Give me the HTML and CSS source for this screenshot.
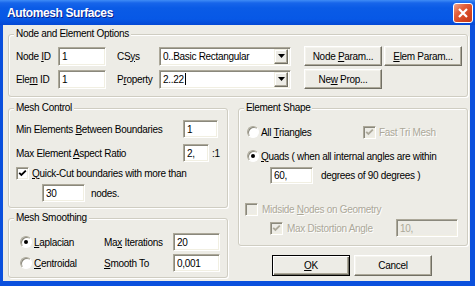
FILE: index.html
```html
<!DOCTYPE html>
<html lang="en">
<head>
  <meta charset="UTF-8">
  <title>Automesh Surfaces</title>
  <link rel="stylesheet" href="styles.css">
</head>
<body>
  <div class="window">
    <div class="titlebar">
      <span class="title">Automesh Surfaces</span>
      <span class="close">
        <svg width="10" height="10" viewBox="0 0 10 10"><path d="M1 1L9 9M9 1L1 9" stroke="#fff" stroke-width="2.2"/></svg>
      </span>
    </div>

    <div class="client">
      <fieldset class="group top-group">
        <legend>Node and Element Options</legend>
        <div class="opts">
          <label>Node <u>I</u>D</label>
          <input class="field node-id" type="text" value="1">
          <label>CS<u>y</u>s</label>
          <div class="combo">
            <span>0..Basic Rectangular</span>
            <span class="combo-btn"><svg width="7" height="4" viewBox="0 0 7 4"><path d="M0 0H7L3.5 4Z"/></svg></span>
          </div>
          <button class="btn">Node <u>P</u>aram...</button>
          <button class="btn"><u>E</u>lem Param...</button>

          <label>Ele<u>m</u> ID</label>
          <input class="field node-id" type="text" value="1">
          <label>P<u>r</u>operty</label>
          <div class="combo">
            <span>2..22<span class="caret"></span></span>
            <span class="combo-btn"><svg width="7" height="4" viewBox="0 0 7 4"><path d="M0 0H7L3.5 4Z"/></svg></span>
          </div>
          <button class="btn">Ne<u>w</u> Prop...</button>
        </div>
      </fieldset>

      <div class="columns">
        <div class="col-left">
          <fieldset class="group mesh-control">
            <legend>Mesh Control</legend>
            <div class="mc-row">
              <label>Min Elements <u>B</u>etween Boundaries</label>
              <input class="field w35" type="text" value="1">
            </div>
            <div class="mc-row">
              <label>Max Element <u>A</u>spect Ratio</label>
              <input class="field w26" type="text" value="2,">
              <span class="ratio">:1</span>
            </div>
            <div class="check-row">
              <span class="check"><svg width="9" height="9" viewBox="0 0 9 9"><path d="M1.2 3.8L3.4 6L7.8 1.6" fill="none" stroke="#000" stroke-width="1.8"/></svg></span>
              <span class="check-label"><u>Q</u>uick-Cut boundaries with more than</span>
            </div>
            <div class="nodes-row">
              <input class="field w43" type="text" value="30">
              <span class="nodes">nodes.</span>
            </div>
          </fieldset>

          <fieldset class="group smoothing">
            <legend>Mesh Smoothing</legend>
            <div class="sm-grid">
              <div class="opt"><span class="radio on"></span><span class="opt-label"><u>L</u>aplacian</span></div>
              <label>Ma<u>x</u> Iterations</label>
              <input class="field w47" type="text" value="20">
              <div class="opt"><span class="radio"></span><span class="opt-label"><u>C</u>entroidal</span></div>
              <label><u>S</u>mooth To</label>
              <input class="field w47" type="text" value="0,001">
            </div>
          </fieldset>
        </div>

        <div class="col-right">
          <fieldset class="group shape">
            <legend>Element Shape</legend>
            <div class="es-row first">
              <span class="radio"></span>
              <span class="es-label tri">All <u>T</u>riangles</span>
              <span class="check disabled"><svg width="9" height="9" viewBox="0 0 9 9"><path d="M1.2 3.8L3.4 6L7.8 1.6" fill="none" stroke="#aca899" stroke-width="1.8"/></svg></span>
              <span class="check-label off">Fast Tri Mesh</span>
            </div>
            <div class="es-row quads">
              <span class="radio on"></span>
              <span class="es-label"><u>Q</u>uads ( when all internal angles are within</span>
            </div>
            <div class="es-row angle">
              <input class="field w43" type="text" value="60,">
              <span class="deg">degrees of 90 degrees )</span>
            </div>
            <div class="es-row midside">
              <span class="check disabled"></span>
              <span class="check-label off">Midside <u>N</u>odes on Geometry</span>
            </div>
            <div class="es-row distortion">
              <span class="check disabled"><svg width="9" height="9" viewBox="0 0 9 9"><path d="M1.2 3.8L3.4 6L7.8 1.6" fill="none" stroke="#aca899" stroke-width="1.8"/></svg></span>
              <span class="check-label off dist-label">Max Distortion Angle</span>
              <input class="field w62 field-off" type="text" value="10," disabled>
            </div>
          </fieldset>

          <div class="actions">
            <button class="btn btn-default"><u>O</u>K</button>
            <button class="btn">Cancel</button>
          </div>
        </div>
      </div>
    </div>
  </div>
</body>
</html>
```

FILE: styles.css
```css
* {
  box-sizing: border-box;
}
body {
  margin: 0;
  font-family: "Liberation Sans", Arial, sans-serif;
  font-size: 10px;
  letter-spacing: -0.3px;
  color: #000;
}
.window {
  width: 475px;
  height: 286px;
  display: flex;
  flex-direction: column;
  background: #0b50dd;
}
.titlebar {
  height: 25px;
  flex: none;
  display: flex;
  align-items: center;
  justify-content: space-between;
  padding: 1px 2px 0 7px;
  background: linear-gradient(to bottom, #3f8cf6 0, #1765ea 3px, #0a5be6 8px, #0758e6 19px, #0448d4 25px);
}
.title {
  color: #fff;
  font-weight: bold;
  font-size: 12px;
  letter-spacing: -0.4px;
  text-shadow: 1px 1px #0a1f8c;
}
.close {
  width: 20px;
  height: 20px;
  display: flex;
  align-items: center;
  justify-content: center;
  border: 1px solid #fff;
  border-radius: 3px;
  background: linear-gradient(135deg, #f1a48c 0, #e35f3a 35%, #d2441f 70%, #c33a1a 100%);
}
.client {
  flex: 1;
  margin: 0 5px 5px 3px;
  padding: 3px 2px 0 5px;
  background: #edece6;
}

/* group boxes */
.group {
  margin: 0;
  min-width: 0;
  padding: 0 5px 0 7px;
  border: 1px solid #cfcdc2;
  border-radius: 3px;
  box-shadow: inset 1px 1px #fff, 1px 1px #fff;
}
.group legend {
  margin-left: -2px;
  padding: 0 2px;
  line-height: 12px;
  background: #edece6;
}

/* controls */
.field {
  height: 18px;
  padding: 0 3px;
  font: inherit;
  letter-spacing: inherit;
  color: #000;
  background: #fff;
  border: 1px solid;
  border-color: #aca899 #fff #fff #aca899;
  box-shadow: inset 1px 1px #8a887c, inset -1px -1px #f1efe2;
  outline: none;
}
.field-off {
  background: #edece6;
  color: #aca899;
}
.w26 { width: 26px; }
.w35 { width: 35px; }
.w43 { width: 43px; }
.w47 { width: 47px; }
.w62 { width: 62px; }

.btn {
  height: 20px;
  padding: 0;
  font: inherit;
  letter-spacing: inherit;
  color: #000;
  background: #edece6;
  border: 1px solid;
  border-color: #fff #716f64 #716f64 #fff;
  box-shadow: inset -1px -1px #aca899, inset 1px 1px #f5f4ee;
}
.btn-default {
  border: 1px solid #000;
  box-shadow: inset 1px 1px #fff, inset -1px -1px #716f64, inset -2px -2px #aca899;
}

.combo {
  width: 132px;
  height: 19px;
  display: flex;
  align-items: center;
  justify-content: space-between;
  padding: 0 2px 0 3px;
  background: #fff;
  border: 1px solid;
  border-color: #aca899 #fff #fff #aca899;
  box-shadow: inset 1px 1px #8a887c, inset -1px -1px #f1efe2;
}
.combo-btn {
  width: 14px;
  height: 15px;
  display: flex;
  align-items: center;
  justify-content: center;
  background: #edece6;
  border: 1px solid;
  border-color: #f1efe2 #716f64 #716f64 #f1efe2;
  box-shadow: inset -1px -1px #aca899, inset 1px 1px #fff;
}
.caret {
  display: inline-block;
  width: 1px;
  height: 12px;
  margin-left: 1px;
  vertical-align: -2px;
  background: #000;
}

.radio {
  flex: none;
  width: 12px;
  height: 12px;
  display: flex;
  align-items: center;
  justify-content: center;
  border-radius: 50%;
  background: #fff;
  border: 1px solid;
  border-color: #aca899 #fff #fff #aca899;
  box-shadow: inset 1px 1px #8a887c;
}
.radio.on::after {
  content: "";
  width: 4px;
  height: 4px;
  border-radius: 50%;
  background: #000;
}
.check {
  flex: none;
  width: 13px;
  height: 13px;
  display: flex;
  align-items: center;
  justify-content: center;
  background: #fff;
  border: 1px solid;
  border-color: #aca899 #fff #fff #aca899;
  box-shadow: inset 1px 1px #8a887c, inset -1px -1px #f1efe2;
}
.check.disabled {
  background: #edece6;
}
.off {
  color: #aca899;
  text-shadow: 1px 1px #fff;
}

/* top group */
.opts {
  display: grid;
  grid-template-columns: 42px 59px 42px 145px 80px 78px;
  grid-auto-rows: 20px;
  row-gap: 3px;
  align-items: center;
  padding: 6px 0 7px;
}
.node-id {
  width: 48px;
  height: 19px;
}
.opts .btn {
  width: 78px;
}

.columns {
  display: flex;
  gap: 10px;
  margin-top: 5px;
}
.col-left {
  width: 220px;
  display: flex;
  flex-direction: column;
  gap: 4px;
}
.col-right {
  width: 230px;
}

/* mesh control */
.mesh-control {
  padding-top: 6px;
  padding-bottom: 5px;
}
.mc-row {
  display: flex;
  align-items: center;
  height: 18px;
}
.mc-row label {
  width: 167px;
}
.mc-row + .mc-row {
  margin-top: 6px;
}
.ratio {
  margin-left: 3px;
}
.check-row {
  display: flex;
  align-items: center;
  height: 16px;
  margin-top: 3px;
}
.check-label {
  margin-left: 3px;
}
.nodes-row {
  display: flex;
  align-items: center;
  height: 18px;
  margin-top: 3px;
}
.nodes-row .field {
  margin-left: 26px;
}
.nodes {
  margin-left: 6px;
}

/* smoothing */
.smoothing {
  padding-top: 9px;
  padding-bottom: 5px;
}
.sm-grid {
  display: grid;
  grid-template-columns: 88px 69px 47px;
  grid-auto-rows: 18px;
  row-gap: 3px;
  align-items: center;
}
.opt {
  display: flex;
  align-items: center;
}
.opt .radio {
  margin-left: 4px;
}
.opt-label {
  margin-left: 2px;
}

/* element shape */
.shape {
  padding-top: 10px;
  padding-bottom: 8px;
}
.es-row {
  display: flex;
  align-items: center;
  height: 16px;
}
.es-row > .radio {
  margin-left: 1px;
}
.es-label {
  margin-left: 2px;
}
.es-label.tri {
  width: 102px;
}
.quads {
  margin-top: 8px;
}
.angle {
  height: 17px;
  margin-top: 3px;
}
.angle .field {
  height: 17px;
  margin-left: 24px;
}
.deg {
  margin-left: 8px;
}
.midside {
  margin-top: 17px;
}
.midside .check {
  margin-left: -1px;
}
.midside .check-label {
  margin-left: 4px;
}
.distortion {
  height: 18px;
  margin-top: 2px;
}
.distortion .check {
  margin-left: 24px;
}
.dist-label {
  width: 109px;
  margin-left: 4px;
}

.actions {
  display: flex;
  gap: 4px;
  margin: 9px 0 0 34px;
}
.actions .btn {
  width: 78px;
  height: 21px;
}
```
